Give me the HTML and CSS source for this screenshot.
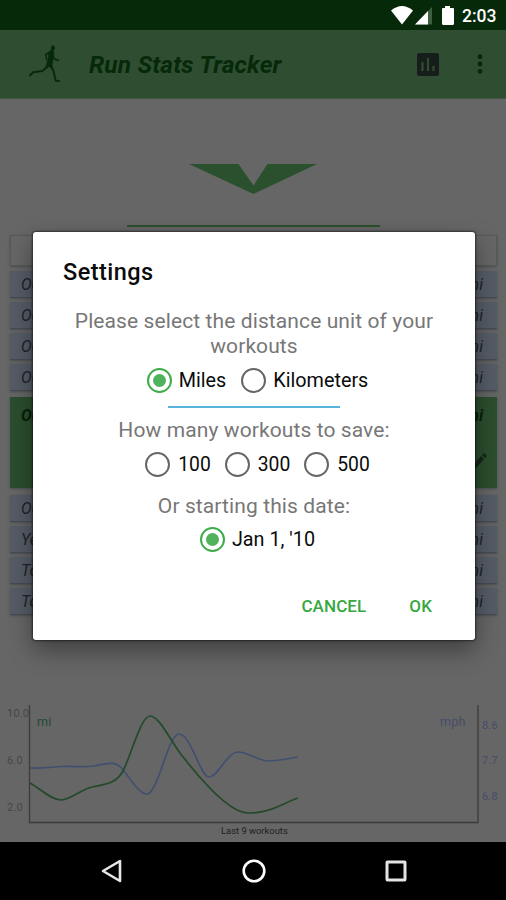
FILE: index.html
```
<!DOCTYPE html>
<html lang="en">
<head>
<meta charset="utf-8">
<title>Run Stats Tracker</title>
<link rel="stylesheet" href="styles.css">
</head>
<body>
<div class="screen">
  <div class="status">
    <svg class="status-icons" width="66" height="22" viewBox="0 0 66 22">
      <path d="M0 4.500Q11 -4.500 22 4.500L11 18.500Z" fill="#fff"/>
      <path d="M41 1V18.500H24Z" fill="#3d6140"/>
      <path d="M37 5V18.500H24Z" fill="#fff"/>
      <path d="M54 0h5v2h3a1 1 0 0 1 1 1v14.500a1.500 1.500 0 0 1-1.500 1.500h-9a1.500 1.500 0 0 1-1.500-1.500v-14.500a1 1 0 0 1 1-1h2Z" fill="#fff"/>
    </svg>
    <span class="clock">2:03</span>
  </div>
  <header class="appbar">
    <svg class="runner" width="34" height="40" viewBox="0 0 34 40">
      <g fill="#06290a" stroke="#06290a" stroke-linecap="round" stroke-linejoin="round">
        <ellipse cx="24" cy="3.700" rx="2" ry="2.500" stroke="none"/>
        <path d="M21.500 8L16.800 10.500L17.500 15.500M24 12L25.500 15L29.500 16.500" fill="none" stroke-width="1.600"/>
        <path d="M22.500 5.500L25 7.500L24.500 13L23 21L24.500 26L20 22.500L16.500 25L17.500 20L19.500 13L19.800 8.500Z" stroke-width=".5"/>
        <path d="M18.500 22.500L13.500 27L4 28.300L.9 31.500M22 22.500L24.500 27L26.700 36.800L30 37" fill="none" stroke-width="1.900"/>
      </g>
    </svg>
    <h1 class="title">Run Stats Tracker</h1>
    <svg class="chart-icon" width="22" height="23" viewBox="0 0 22 23">
      <rect width="22" height="23" rx="2.500" fill="#171d1b"/>
      <path d="M5.500 9V18M11 5V18M16.500 13V18" stroke="#2f4e31" stroke-width="2.200"/>
    </svg>
    <svg class="more-icon" width="6" height="20" viewBox="0 0 6 20"><g fill="#06290a"><circle cx="3" cy="2.700" r="2.400"/><circle cx="3" cy="10" r="2.400"/><circle cx="3" cy="17.300" r="2.400"/></g></svg>
  </header>
  <main class="content">
    <svg class="logo" width="128" height="30" viewBox="0 0 128 30"><path d="M0 0H49.500L64.500 21.500L78.500 0H128L64.500 30Z" fill="#2b502d"/></svg>
    <div class="divider"></div>
    <div class="rows">
      <div class="row head"></div>
      <div class="row"><span>Oct 2</span><span>mi</span></div>
      <div class="row"><span>Oct 3</span><span>mi</span></div>
      <div class="row"><span>Oct 4</span><span>mi</span></div>
      <div class="row"><span>Oct 5</span><span>mi</span></div>
      <div class="row selected"><span>Oct 6</span><span>mi</span>
        <svg class="pencil" width="14" height="16" viewBox="0 0 14 16"><path d="M0 16V12L8 3L11 6L3 15ZM9 2L11 0L14 3L12 5Z" fill="#152519"/></svg>
      </div>
      <div class="row"><span>Oct 7</span><span>mi</span></div>
      <div class="row"><span>Yesterday</span><span>mi</span></div>
      <div class="row"><span>Today</span><span>mi</span></div>
      <div class="row"><span>Today</span><span>mi</span></div>
    </div>
    <svg class="graph" width="506" height="147" viewBox="0 0 506 147">
      <path d="M29.500 10V127.500H478V10" fill="none" stroke="#3b3b3b" stroke-width="1.300"/>
      <path d="M30 73C42 73.500 50 72 62 71.500S84 72.500 94 71C105 69 116 64 124 76C134 89 140 99 147 99C158 99 168 39 179 39C191 39 200 82 209 82C218 82 227 57 238 57C248 57 258 66 269 66C280 65.500 288 64 298 62" fill="none" stroke="#42506f" stroke-width="1.700"/>
      <path d="M30 88C41 94 51 105 61 105C70 105 82 94 92 92C104 89 115 90 123 76C132 58 141 21 150 21C159 21 169 43 180 58C197 80 228 118 248 118C271 118 281 109 298 103" fill="none" stroke="#234a2a" stroke-width="1.700"/>
      <g class="axis"><text x="7" y="22">10.0</text><text x="7" y="69">6.0</text><text x="7" y="116">2.0</text></g>
      <g class="axis blue"><text x="482" y="34">8.6</text><text x="482" y="69">7.7</text><text x="482" y="105">6.8</text></g>
      <text class="unit" x="37" y="31">mi</text><text class="unit blue" x="440" y="31">mph</text>
      <text class="caption" x="221" y="139">Last 9 workouts</text>
    </svg>
  </main>
  <nav class="nav">
    <svg width="24" height="26" viewBox="0 0 24 26"><path d="M3 13L20 3V23Z" fill="none" stroke="#e8e8e8" stroke-width="2.600" stroke-linejoin="round"/></svg>
    <svg width="24" height="26" viewBox="0 0 24 26"><circle cx="12" cy="13" r="10.300" fill="none" stroke="#fff" stroke-width="2.600"/></svg>
    <svg width="24" height="26" viewBox="0 0 24 26"><rect x="3" y="4" width="18" height="18" rx=".5" fill="none" stroke="#e4e4e4" stroke-width="3"/></svg>
  </nav>
  <section class="dialog" role="dialog">
    <h2 class="heading">Settings</h2>
    <p class="prompt">Please select the distance unit of your workouts</p>
    <div class="options units">
      <label class="option"><i class="radio on"></i><span>Miles</span></label>
      <label class="option"><i class="radio"></i><span>Kilometers</span></label>
    </div>
    <div class="rule"></div>
    <p class="prompt">How many workouts to save:</p>
    <div class="options counts">
      <label class="option"><i class="radio"></i><span>100</span></label>
      <label class="option"><i class="radio"></i><span>300</span></label>
      <label class="option"><i class="radio"></i><span>500</span></label>
    </div>
    <p class="prompt">Or starting this date:</p>
    <div class="options date">
      <label class="option"><i class="radio on"></i><span>Jan 1, '10</span></label>
    </div>
    <div class="actions"><span>CANCEL</span><span>OK</span></div>
  </section>
</div>
</body>
</html>
```
FILE: styles.css
```
* { box-sizing: border-box; }
body { margin: 0; font-family: Roboto, "Liberation Sans", sans-serif; }
h1, h2, p { margin: 0; }
svg { display: block; flex: none; }
.screen { position: relative; width: 506px; height: 900px; overflow: hidden; background: #666; display: flex; flex-direction: column; }
.status { height: 30px; background: #06290a; display: flex; justify-content: flex-end; padding: 6px 9px 0 0; }
.status-icons { margin-right: 5px; }
.clock { color: #fff; font-size: 17.5px; font-weight: 500; line-height: 21px; width: 35px; white-space: nowrap; }
.appbar { height: 69px; background: #2f4e31; border-bottom: 1px solid #455646; display: flex; align-items: center; padding: 0 23px 0 29px; color: #06290a; }
.title { margin-left: 26px; font-size: 24.5px; font-weight: 700; font-style: italic; line-height: 30px; white-space: nowrap; padding-top: 2px; flex: 1; letter-spacing: .13px; }
.chart-icon { margin-right: 38px; }
.content { height: 743px; display: flex; flex-direction: column; align-items: center; }
.logo { margin: 65px 0 31px; }
.divider { width: 253px; height: 2px; background: #2b502d; flex: none; }
.rows { width: 487px; margin: 8px 0 0 1px; display: flex; flex-direction: column; gap: 4px; }
.row { height: 27px; padding: 0 14px 0 11px; display: flex; justify-content: space-between; line-height: 28px; font-size: 16px; font-style: italic; color: #202327; background: #555c66; border-bottom: 1px solid #464b52; box-shadow: 0 1px 2px #4b4e52; }
.row.head { height: 31px; margin-bottom: 1px; background: #666; border: 1px solid #585858; }
.row.selected { position: relative; height: 91px; margin: 2px 0 3px; padding-top: 5px; background: #2b4e2d; border: 0; font-weight: 700; color: #071e0a; }
.pencil { position: absolute; right: 10px; bottom: 19px; }
.graph { margin-top: auto; }
.axis { font-size: 11px; letter-spacing: .2px; fill: #474747; }
.unit { font-size: 12.5px; letter-spacing: .2px; fill: #234a32; }
.axis.blue, .unit.blue { fill: #454c69; }
.caption { font-size: 9.4px; fill: #202020; }
.nav { height: 58px; background: #000; display: flex; justify-content: center; align-items: center; gap: 118px; padding-left: 2px; }
.dialog { position: absolute; left: 33px; top: 232px; width: 442px; height: 408px; background: #fff; border-radius: 3px; box-shadow: 0 0 2px 1px rgba(0,0,0,.5), 0 10px 24px rgba(0,0,0,.4); padding: 25px 30px 0; display: flex; flex-direction: column; }
.heading { font-size: 23.5px; font-weight: 500; line-height: 30px; color: #0b0b0b; margin-bottom: 22px; letter-spacing: .45px; }
.prompt { font-size: 21px; font-weight: 400; line-height: 25px; color: #777; text-align: center; letter-spacing: .1px; }
.options { display: flex; justify-content: center; height: 25px; align-items: center; }
.option { display: flex; align-items: center; gap: 7px; font-size: 19.8px; color: #0b0b0b; white-space: nowrap; line-height: 25px; }
.radio { width: 25px; height: 25px; flex: none; border: 2px solid #666; border-radius: 50%; display: flex; align-items: center; justify-content: center; }
.radio.on { border-color: #3eac49; border-width: 2.5px; }
.radio.on::after { content: ""; width: 13px; height: 13px; border-radius: 50%; background: #50b25a; }
.units { margin-top: 9px; gap: 15px; padding-left: 7px; }
.rule { width: 172px; height: 2px; margin: 13px auto 10px; background: #58b3df; }
.counts { margin: 9px 0 17px; gap: 14px; padding-left: 7px; }
.counts .option { gap: 8px; font-size: 19.3px; }
.date { margin-top: 8px; padding-left: 7px; }
.actions { display: flex; justify-content: flex-end; gap: 43px; margin-top: 42px; padding-right: 13px; font-size: 17px; font-weight: 500; line-height: 25px; color: #36a842; letter-spacing: .1px; }
```
